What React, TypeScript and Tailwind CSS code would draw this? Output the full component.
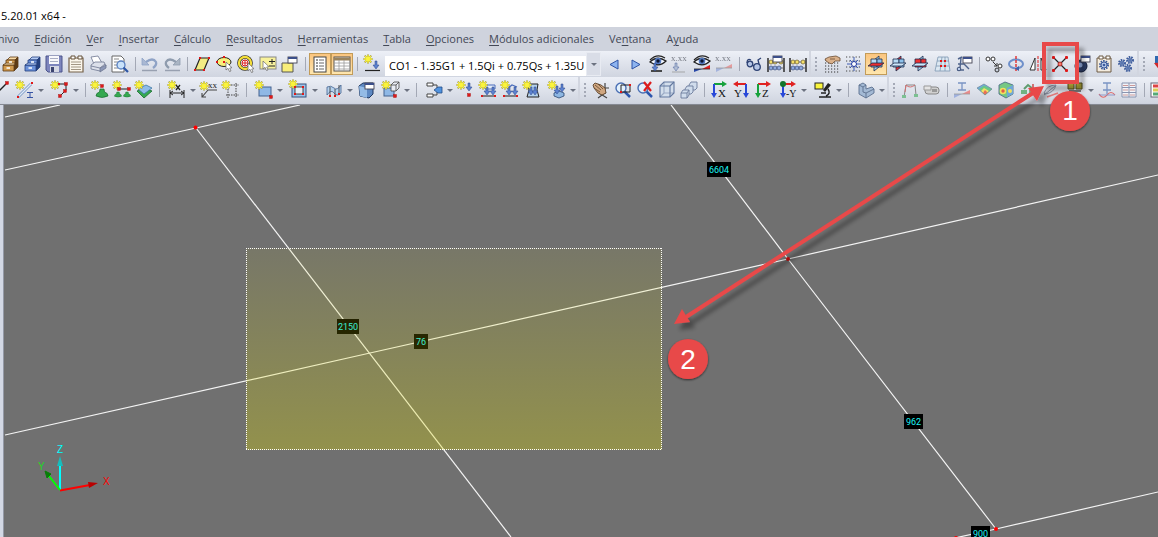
import type { ReactNode } from "react"

type Tool = {
  icon: string
  label: string
  caret?: boolean
  active?: boolean
}

type Item = Tool | "sep" | "grip" | "combo"

const menus: [string, string, string][] = [
  ["", "A", "rchivo"],
  ["", "E", "dición"],
  ["", "V", "er"],
  ["", "I", "nsertar"],
  ["", "C", "álculo"],
  ["", "R", "esultados"],
  ["", "H", "erramientas"],
  ["", "T", "abla"],
  ["", "O", "pciones"],
  ["", "M", "ódulos adicionales"],
  ["Ve", "n", "tana"],
  ["A", "y", "uda"],
]

/* Shared icon parts */
const Star = ({ x = 4, y = 4 }: { x?: number; y?: number }) => (
  <g transform={`translate(${x} ${y})`}>
    <path d="M0-4.500V4.500M-4.500 0H4.500M-3.300-3.300L3.300 3.300M3.300-3.300L-3.300 3.300" stroke="#a39a3a" strokeWidth="1.800" />
    <path d="M0-4V4M-4 0H4M-2.800-2.800L2.800 2.800M2.800-2.800L-2.800 2.800" stroke="#fbf43c" strokeWidth="1.300" />
  </g>
)

const Node = ({ x, y }: { x: number; y: number }) => (
  <rect x={x - 1.5} y={y - 1.5} width="3" height="3" fill="#e01818" stroke="#a01010" strokeWidth=".4" />
)

const Dot = ({ x, y }: { x: number; y: number }) => <rect x={x - 1} y={y - 1} width="2" height="2" fill="#e01818" />

const Cursor = ({ x, y }: { x: number; y: number }) => (
  <path transform={`translate(${x} ${y})`} d="M0 0V8L2 6.300L3.500 9.500L5 9L3.700 6L6 5.700Z" fill="#fff" stroke="#666" strokeWidth=".7" />
)

const Down = ({ x, y, c = "#5d82cf" }: { x: number; y: number; c?: string }) => (
  <path transform={`translate(${x} ${y})`} d="M-1 0H1V4H3L0 8L-3 4H-1Z" fill={c} stroke="#28448a" strokeWidth=".5" />
)

const Support = ({ x, y }: { x: number; y: number }) => (
  <path transform={`translate(${x} ${y})`} d="M-2 0H2L2.500 3Q6 4 6 7Q0 10-6 7Q-6 4-2.500 3Z" fill="#35a851" stroke="#176b2c" strokeWidth=".7" />
)

const Cabinet = ({ top, front, dark }: { top: string; front: string; dark: string }) => (
  <g stroke={dark} strokeWidth=".8">
    <path d="M6 5L9 2H17L14 5Z" fill={top} />
    <path d="M14 5L17 2V12L13 16V9Z" fill={dark} />
    <path d="M5 5H14V10H5Z" fill={front} />
    <path d="M2 10H13V16H2Z" fill={front} />
    <path d="M2 10L5 8H14L13 10Z" fill={top} />
    <path d="M8 7H11M5.500 13H9" stroke="#fff" strokeWidth="1.500" />
  </g>
)

const Eye = () => (
  <g>
    <path d="M1 7Q8 0 17 6Q10 13 1 7Z" fill="#f4f8ff" stroke="#222" strokeWidth="1.300" />
    <circle cx="9" cy="6" r="3.300" fill="#5379c0" />
    <circle cx="9" cy="6" r="1.700" fill="#0b1530" />
    <path d="M1 5Q8-2 16 3" stroke="#222" strokeWidth="1.200" />
  </g>
)

const Xxx = () => (
  <text x="0" y="6" fontSize="9" fontFamily="Liberation Serif, serif" fill="#60646e">
    x.xx
  </text>
)

const Planes = ({ hot }: { hot: "h" | "v" | "f" }) => (
  <g stroke="#1c2c4c" strokeWidth=".8">
    <path d="M7 5L12 1V12L7 16Z" fill={hot === "v" ? "#ee3030" : "#a8d4f4"} />
    <path d="M4 4H10V12H4Z" fill={hot === "f" ? "#ee3030" : "#b9dcf6"} />
    <path d="M10 4H15V12H10Z" fill={hot === "f" ? "#ee3030" : "#8ec2ec"} />
    <path d="M1 11L5 8H17L13 11Z" fill={hot === "h" ? "#ee3030" : "#cde7fa"} />
  </g>
)

const Cube = ({ c = "#d3deec", s = "#6378a0" }: { c?: string; s?: string }) => (
  <g stroke={s} strokeWidth="1.100">
    <path d="M2 5L6 1H16V12L12 16H2Z" fill={c} />
    <path d="M2 5H12V16M12 5L16 1" />
    <path d="M6 1V12H16M6 12L2 16" strokeOpacity=".5" />
  </g>
)

const Grid = () => (
  <path
    d="M2 5H17M2 8H17M2 11H17M2 14H17M2 17H17"
    stroke="#333"
    strokeWidth="1.200"
    strokeDasharray="1.200 1.800"
  />
)

const Axis = ({ h, v, name, flip, small }: { h: string; v: string; name: string; flip?: boolean; small?: boolean }) => (
  <g>
    <g transform={flip ? "translate(18 0) scale(-1 1)" : undefined}>
      <path d="M4 3H13" stroke={h} strokeWidth="2" />
      <path d="M12 0L17 3L12 6Z" fill={h} />
      <path d="M4 3V13" stroke={v} strokeWidth="2" />
      <path d="M1 12L4 17L7 12Z" fill={v} />
    </g>
    <text x={flip ? 2 : small ? 7 : 8} y="16" fontSize={small ? 10 : 11} fontFamily="Liberation Serif, serif" fill="#111">
      {name}
    </text>
  </g>
)

const Abacus = () => (
  <g>
    <path d="M1 3V17M17 3V17" stroke="#111" strokeWidth="1.300" />
    <path d="M1 7H17M1 13H17" stroke="#555" strokeWidth=".8" />
    <g fill="#f4df6a" stroke="#54451a" strokeWidth=".6">
      <circle cx="4" cy="7" r="2" />
      <circle cx="8" cy="7" r="2" />
      <circle cx="14" cy="7" r="2" />
    </g>
    <g fill="#8fa9dc" stroke="#263a6c" strokeWidth=".6">
      <circle cx="4" cy="13" r="2" />
      <circle cx="8" cy="13" r="2" />
      <circle cx="12" cy="13" r="2" />
    </g>
  </g>
)

const MiniWin = ({ x, y }: { x: number; y: number }) => (
  <g transform={`translate(${x} ${y})`}>
    <rect x="0" y="0" width="9" height="6" fill="#fff" stroke="#445" strokeWidth=".9" />
    <path d="M0 1H9" stroke="#3c4f8a" strokeWidth="2" />
  </g>
)

const Gear = ({ x, y, r }: { x: number; y: number; r: number }) => (
  <g>
    <circle cx={x} cy={y} r={r} fill="none" stroke="#3d5c9c" strokeWidth="2" strokeDasharray="1.500 1" />
    <circle cx={x} cy={y} r={r - 1} fill="#b9cbea" stroke="#3d5c9c" />
    <circle cx={x} cy={y} r={r / 3} fill="#3d5c9c" />
  </g>
)

const Magnifier = () => (
  <g>
    <path d="M10 10L16 16" stroke="#2d56ad" strokeWidth="2.500" />
    <circle cx="7" cy="7" r="5" fill="#e3f1fc" stroke="#4a6fb4" strokeWidth="1.400" />
  </g>
)

const icons: Record<string, ReactNode> = {
  cabinet: <Cabinet top="#f8dba8" front="#d19a4e" dark="#5d3a14" />,
  cabinetBlue: <Cabinet top="#b5ccf6" front="#6b90d8" dark="#24407e" />,
  save: (
    <g>
      <path d="M1 1H17V17H3L1 15Z" fill="#7d85bd" stroke="#4d558c" />
      <rect x="4" y="1" width="10" height="8" fill="#f8f8fb" />
      <path d="M5 3.500H13M5 6.500H13" stroke="#a9aec4" />
      <rect x="5" y="11" width="9" height="6" fill="#d5d8e4" />
      <rect x="6" y="12" width="3" height="5" fill="#3c4470" />
    </g>
  ),
  clipboard: (
    <g>
      <path d="M2 3H16V17H2Z" fill="#fbf6ec" stroke="#756149" strokeWidth="1.200" />
      <path d="M4 1H8V4H4ZM11 1H15V4H11Z" fill="#fff" stroke="#655139" />
      <path d="M4 7H14M4 9.500H14M4 12H14M4 14.500H14" stroke="#8c7d6a" strokeWidth=".8" />
    </g>
  ),
  print: (
    <g stroke="#6d7690" strokeWidth=".8">
      <path d="M2 2L9 1L13 8L5 9Z" fill="#fff" />
      <path d="M2 10L6 7L15 7L17 11L11 16L2 14Z" fill="#dce0ea" />
      <path d="M2 11L11 13L16 9" fill="none" />
      <path d="M11 13L17 10V13L11 17Z" fill="#8d98b8" />
    </g>
  ),
  preview: (
    <g>
      <path d="M1 1H10L13 4V17H1Z" fill="#fff" stroke="#666" />
      <path d="M3 4H8M3 7H8M3 10H6M3 13H7" stroke="#888" />
      <circle cx="10" cy="10" r="4" fill="#c9e2fa" stroke="#5a80c0" strokeWidth="1.300" />
      <path d="M12.500 12.500L17 17" stroke="#2d56a5" strokeWidth="2.200" />
    </g>
  ),
  undo: (
    <g fill="none" stroke="#8fa3c6">
      <path d="M5 7Q12 2 15 7Q16 10 12 13" strokeWidth="2.300" />
      <path d="M1 3V10H8Z" fill="#a9b8d3" strokeWidth=".8" />
      <path d="M1 15.500H16" stroke="#98a0b0" strokeWidth="1.500" />
    </g>
  ),
  redo: (
    <g fill="none" stroke="#8f9cae">
      <path d="M13 7Q6 2 3 7Q2 10 6 13" strokeWidth="2.300" />
      <path d="M17 3V10H10Z" fill="#aab5c4" strokeWidth=".8" />
      <path d="M2 15.500H17" stroke="#98a0b0" strokeWidth="1.500" />
    </g>
  ),
  selPoly: (
    <g>
      <path d="M2 15L7 3H16L11 15Z" fill="#f3ec84" stroke="#222" strokeWidth="1.200" />
      <Dot x={2} y={15} />
      <Dot x={7} y={3} />
      <Dot x={16} y={3} />
      <Dot x={11} y={15} />
    </g>
  ),
  selEllipse: (
    <g>
      <ellipse cx="9" cy="7" rx="7" ry="4.500" fill="#f9f07a" stroke="#222" />
      <Dot x={2} y={7} />
      <Dot x={9} y={2} />
      <Dot x={9} y={7} />
      <Cursor x={11} y={7} />
    </g>
  ),
  selRing: (
    <g>
      <circle cx="8" cy="8" r="6" fill="none" stroke="#222" strokeWidth="3.600" />
      <circle cx="8" cy="8" r="6" fill="none" stroke="#f5df3a" strokeWidth="2.400" />
      <circle cx="8" cy="8" r="3" fill="#fff" stroke="#d22" />
      <path d="M8 5V11M5 8H11" stroke="#d22" />
      <Cursor x={11} y={8} />
    </g>
  ),
  selPlus: (
    <g>
      <rect x="1" y="2" width="16" height="12" fill="#f8f29b" stroke="#888" />
      <path d="M13 4V9M10 6.500H16M10 11H16" stroke="#222" />
      <Cursor x={4} y={6} />
    </g>
  ),
  selWin: (
    <g>
      <path d="M1 8H12V17H1Z" fill="#f8ee7a" stroke="#555" />
      <MiniWin x={7} y={2} />
    </g>
  ),
  list: (
    <g>
      <rect x="3" y="2" width="12" height="15" fill="#fff" stroke="#444" />
      <path d="M5 5H7M5 8H7M5 11H7M5 14H7" stroke="#333" />
      <path d="M8 5H13M8 8H13M8 11H13M8 14H13" stroke="#666" />
    </g>
  ),
  table: (
    <g>
      <rect x="1" y="2" width="16" height="14" fill="#fff" stroke="#555" />
      <path d="M1 4H17" stroke="#9a835c" strokeWidth="3" />
      <path d="M1 8H17M1 11H17M1 14H17M6 5V16M11 5V16" stroke="#999" strokeWidth=".8" />
    </g>
  ),
  newLoad: (
    <g>
      <Star x={5} y={4} />
      <Down x={13} y={6} />
      <path d="M2 15.500H17" stroke="#222" strokeWidth="1.200" />
    </g>
  ),
  prev: <path d="M13 5V14L5 9.500Z" fill="#8db4f0" stroke="#2d53a5" />,
  next: <path d="M5 5V14L13 9.500Z" fill="#8db4f0" stroke="#2d53a5" />,
  eyeLoad: (
    <g>
      <Eye />
      <path d="M2 16H13" stroke="#222" strokeWidth="1.600" />
      <Down x={6} y={8} />
    </g>
  ),
  xxLoad: (
    <g opacity=".8">
      <Xxx />
      <Down x={5} y={8} c="#a8b6cf" />
      <path d="M1 17H14" stroke="#999" />
    </g>
  ),
  eyeRes: (
    <g>
      <path d="M1 17V14L9 14Z" fill="#2848a8" />
      <path d="M9 14L17 10V14Z" fill="#e02020" />
      <path d="M1 14H17" stroke="#222" strokeWidth=".8" />
      <Eye />
    </g>
  ),
  xxRes: (
    <g opacity=".8">
      <Xxx />
      <path d="M1 17V13H9Z" fill="#98aadb" />
      <path d="M9 13L17 9V13Z" fill="#e58a8a" />
      <path d="M1 13H17" stroke="#888" strokeWidth=".8" />
    </g>
  ),
  glasses: (
    <g fill="#b5c6e6" stroke="#2d4274" strokeWidth="1.300">
      <circle cx="5" cy="9" r="2.800" />
      <circle cx="12" cy="12" r="3.300" />
      <path d="M2 8Q2 3 6 5M7 10L9 11M14 9L13 5L16 3" fill="none" />
    </g>
  ),
  abacusWin: (
    <g>
      <Abacus />
      <MiniWin x={6} y={1} />
    </g>
  ),
  abacus: <Abacus />,
  handGrid: (
    <g>
      <Grid />
      <path d="M2 4L6 2L13 1L17 3V6L12 6L9 9L6 8L3 6Z" fill="#d9b08a" stroke="#6a4c34" strokeWidth=".8" />
      <path d="M7 4H12" stroke="#6a4c34" strokeWidth=".8" />
    </g>
  ),
  snap: (
    <g>
      <path d="M1 2H17M1 6H17M1 12H17M1 16H17" stroke="#444" strokeDasharray="1.200 2" />
      <path d="M9 2V16M2 9H16M5 5L13 13M13 5L5 13" stroke="#3050b0" strokeWidth=".9" />
      <circle cx="9" cy="9" r="2.500" fill="#fff" stroke="#2038a0" />
    </g>
  ),
  planeH: <Planes hot="h" />,
  planeV: <Planes hot="v" />,
  planeF: <Planes hot="f" />,
  gridRed: (
    <g>
      <path d="M5 2H15L17 16H2ZM4 6H16M3 11H16M9 2L7 16M12 2V16" fill="#dce8f2" stroke="#7f98b2" strokeWidth=".8" />
      <Dot x={8} y={6} />
      <Dot x={12} y={6} />
      <Dot x={8} y={11} />
      <Dot x={12} y={11} />
    </g>
  ),
  toolWin: (
    <g>
      <path d="M6 3L5 13M3 9H9L14 14M3 4L7 2M2 15H9" fill="none" stroke="#50648c" strokeWidth="1.400" />
      <MiniWin x={8} y={2} />
      <circle cx="4" cy="14" r="1.800" fill="#b9cbea" stroke="#40537a" />
    </g>
  ),
  moveNode: (
    <g fill="#fff" stroke="#333">
      <circle cx="3" cy="4" r="2" />
      <circle cx="8" cy="4" r="2" />
      <path d="M8 7L12 11M12 8V11H9" fill="none" />
      <circle cx="15" cy="11" r="2" />
      <circle cx="12" cy="15" r="2" fill="#c8d0dc" />
    </g>
  ),
  rotate: (
    <g fill="none">
      <ellipse cx="9" cy="9" rx="7" ry="4.500" stroke="#6d8fca" strokeWidth="2" />
      <path d="M9 1V17" stroke="#e02020" strokeWidth="1.300" strokeDasharray="3 1" />
      <path d="M12 11L8 13.500L12 16Z" fill="#3f62aa" />
    </g>
  ),
  mirror: (
    <g fill="#fff" stroke="#333">
      <path d="M6 3V15H1Z" />
      <path d="M12 3V15H17Z" />
      <path d="M9 1V17" stroke="#e02020" strokeDasharray="3 1" />
    </g>
  ),
  joinNodes: (
    <g>
      <path d="M3 3L15 15M15 3L3 15" stroke="#222" strokeWidth="1.200" />
      <rect x="1" y="1" width="3" height="3" rx="1" fill="#e01818" />
      <rect x="14" y="1" width="3" height="3" rx="1" fill="#e01818" />
      <rect x="1" y="14" width="3" height="3" rx="1" fill="#e01818" />
      <rect x="14" y="14" width="3" height="3" rx="1" fill="#e01818" />
      <circle cx="9" cy="9" r="2" fill="#f07a6a" stroke="#b01818" strokeWidth=".8" />
    </g>
  ),
  camera: (
    <g>
      <circle cx="8" cy="11" r="6" fill="#2c3c66" stroke="#111c38" />
      <circle cx="7" cy="10" r="2.500" fill="#8fa6d6" />
      <MiniWin x={8} y={1} />
    </g>
  ),
  gearPage: (
    <g>
      <path d="M2 3H16V17H2Z" fill="#f4ecdf" stroke="#6d5b45" />
      <path d="M4 1H8V4H4ZM11 1H15V4H11Z" fill="#fff" stroke="#6d5b45" />
      <Gear x={9} y={10} r={4} />
    </g>
  ),
  gears: (
    <g>
      <Gear x={5} y={8} r={3} />
      <Gear x={13} y={5} r={3} />
      <Gear x={11} y={13} r={3} />
    </g>
  ),
  redBlock: (
    <g>
      <path d="M4 1H15V8H4Z" fill="#2e69b0" />
      <path d="M3 8L9 16L16 11V7Z" fill="#d22a2a" />
    </g>
  ),
  line: (
    <g>
      <path d="M2 16L15 3" stroke="#222" strokeWidth="1.300" />
      <Node x={16} y={2} />
    </g>
  ),
  member: (
    <g>
      <path d="M2 16L15 3" stroke="#7f9cc8" strokeWidth="3" />
      <path d="M2 16L15 3" stroke="#dfe9f6" strokeWidth="1.300" />
      <Star />
      <Dot x={2} y={16} />
      <Dot x={16} y={2} />
      <path d="M11 11.500H17M11 16.500H17M14 11V17" stroke="#3654a4" />
    </g>
  ),
  polyline: (
    <g>
      <path d="M6 3H15V9L9 15" fill="none" stroke="#222" />
      <Star />
      <Dot x={8} y={3} />
      <Node x={15} y={3} />
      <Node x={14} y={10} />
      <Node x={9} y={15} />
    </g>
  ),
  support: (
    <g>
      <Star />
      <Support x={11} y={8} />
      <Node x={11} y={5} />
    </g>
  ),
  lineSupport: (
    <g>
      <path d="M5 8H16" stroke="#222" />
      <Star />
      <Node x={6} y={8} />
      <Node x={16} y={8} />
      <g transform="translate(5 11) scale(.6)">
        <Support x={0} y={0} />
      </g>
      <g transform="translate(14 11) scale(.6)">
        <Support x={0} y={0} />
      </g>
    </g>
  ),
  surfSupport: (
    <g>
      <path d="M2 10L9 7L17 10L9 17Z" fill="#35a851" stroke="#176b2c" strokeWidth=".8" />
      <path d="M3 8L11 4L17 7L9 13Z" fill="#8fbce8" stroke="#3d78a2" strokeWidth=".8" />
      <Star />
    </g>
  ),
  dimension: (
    <g>
      <path d="M2 9V17M16 9V17M2 12H16M5 10L2 12L5 14M13 10L16 12L13 14" fill="none" stroke="#222" />
      <Star />
      <path d="M8 4L12 9M12 4L8 9" stroke="#222" strokeWidth="1.300" />
    </g>
  ),
  comment: (
    <g>
      <path d="M17 9H8L2 16M2 12V16H6" fill="none" stroke="#444" strokeWidth="1.100" />
      <Star x={4} y={5} />
      <text x="8" y="7" fontSize="9" fontFamily="Liberation Serif, serif" fill="#222">
        xx
      </text>
    </g>
  ),
  guides: (
    <g>
      <path d="M6 3V17M14 2V17M4 4H17M4 14H17" stroke="#444" strokeDasharray="1.500 1" />
      <Star />
    </g>
  ),
  surface: (
    <g>
      <rect x="4" y="6" width="12" height="9" fill="#8fb8e6" stroke="#45638f" />
      <Star />
      <Node x={16} y={16} />
    </g>
  ),
  opening: (
    <g>
      <rect x="2" y="3" width="14" height="13" fill="#9ec4ea" stroke="#35537f" />
      <rect x="5" y="6" width="8" height="7" fill="#e8eef6" stroke="#222" strokeWidth=".8" />
      <Star x={3} y={3} />
      <Dot x={5} y={6} />
      <Dot x={13} y={6} />
      <Dot x={5} y={13} />
      <Dot x={13} y={13} />
    </g>
  ),
  curved: (
    <g>
      <path d="M2 6Q6 4 9 7T16 4V12Q12 16 9 12T2 14Z" fill="#b5d2ee" stroke="#45638f" strokeWidth=".8" />
      <path d="M5 6V15M10 8V15M14 4V13" stroke="#333" strokeWidth=".8" />
      <Dot x={5} y={15} />
      <Dot x={10} y={15} />
      <Dot x={14} y={13} />
    </g>
  ),
  solid: (
    <g>
      <path d="M2 5L6 2H16V13L12 17L3 15Z" fill="#5d88c2" stroke="#20375f" />
      <path d="M2 5L10 7V17L3 15Z" fill="#94bbe6" />
      <MiniWin x={8} y={2} />
    </g>
  ),
  newSolid: (
    <g>
      <rect x="2" y="7" width="10" height="8" fill="#8fb8e6" stroke="#45638f" />
      <path d="M9 4L12 1H17V7L14 10H9ZM9 4H14V10M14 4L17 1" fill="#e8ecf4" stroke="#444" strokeWidth=".8" />
      <Star />
      <Node x={13} y={15} />
    </g>
  ),
  convert: (
    <g>
      <path d="M2 2H8V5H2ZM2 13H8V16H2Z" fill="#fff" stroke="#444" />
      <path d="M8 4H12V7M8 14H12V11" fill="none" stroke="#444" />
      <path d="M9 9L13 6H17V12H13Z" fill="#4f92de" stroke="#234b86" strokeWidth=".8" />
    </g>
  ),
  nodeLoad: (
    <g>
      <Star />
      <Down x={12} y={2} />
      <Node x={12} y={14} />
    </g>
  ),
  memLoad: (
    <g>
      <path d="M6 4H16V8H6Z" fill="#e2ebf8" stroke="#4a6dbc" />
      <Down x={8} y={6} />
      <Down x={14} y={6} />
      <path d="M3 15H16" stroke="#222" />
      <Star />
      <Dot x={3} y={15} />
      <Dot x={16} y={15} />
    </g>
  ),
  memLoad2: (
    <g>
      <path d="M6 8L11 4L16 6" fill="none" stroke="#4a6dbc" strokeWidth="1.300" />
      <Down x={8} y={6} />
      <Down x={14} y={6} />
      <path d="M3 15H16" stroke="#222" />
      <Star />
      <Dot x={3} y={15} />
      <Dot x={16} y={15} />
    </g>
  ),
  surfLoad: (
    <g>
      <path d="M5 3H15L14 9L16 16H4L6 9Z" fill="#b3d0ec" stroke="#222" />
      <Down x={8} y={6} />
      <Down x={12} y={6} />
      <Star />
    </g>
  ),
  solidLoad: (
    <g>
      <path d="M6 12L11 10L16 12V15L11 17L6 15Z" fill="#8db6e2" stroke="#28456e" strokeWidth=".8" />
      <Down x={9} y={5} />
      <Down x={14} y={3} />
      <Star />
    </g>
  ),
  pan: (
    <g>
      <path d="M13 2V13M9 7H17M7 12L15 17M14 11L6 17" stroke="#444" strokeWidth="1.200" />
      <path d="M1 4L3 2L9 4L13 7L14 12L10 14L6 12L2 7Z" fill="#cfa680" stroke="#5f452c" strokeWidth=".9" />
      <path d="M3 4L9 9M6 3L11 8M2 7L8 11" stroke="#5f452c" strokeWidth=".8" />
    </g>
  ),
  zoomWin: (
    <g>
      <Magnifier />
      <path d="M7 4H16V11H7Z" fill="none" stroke="#222" />
      <Dot x={16} y={4} />
      <Dot x={7} y={11} />
    </g>
  ),
  zoomX: (
    <g>
      <Magnifier />
      <path d="M8 1L15 10M15 1L8 10" stroke="#dd1c1c" strokeWidth="2.200" />
    </g>
  ),
  cube: <Cube />,
  cubes: (
    <g fill="#d0dcec" stroke="#6c7c9c" strokeWidth=".9">
      <path d="M9 4L11 1H17V7L15 9H9Z" />
      <path d="M5 8L7 5H13V11L11 13H5Z" />
      <path d="M1 12L3 9H9V14L7 17H1Z" />
      <path d="M1 12H7V17M7 12L9 9" fill="none" />
    </g>
  ),
  axX: <Axis h="#17a23c" v="#2848d8" name="X" />,
  axY: <Axis h="#e02222" v="#2848d8" name="Y" flip />,
  axZ: <Axis h="#e02222" v="#17a23c" name="Z" />,
  axMinusY: (
    <g>
      <Axis h="#e02222" v="#2848d8" name="-Y" small />
      <circle cx="4" cy="3" r="3" fill="#14752c" />
    </g>
  ),
  microscope: (
    <g>
      <path d="M14 2L17 4L11 11L9 9Z" fill="#222" />
      <path d="M14 8Q17 13 12 15M5 16H17M7 12H12" stroke="#222" strokeWidth="1.500" />
      <rect x="1" y="2" width="8" height="6" fill="#fbf63c" stroke="#222" />
    </g>
  ),
  part: (
    <g stroke="#5c708e" strokeWidth=".9">
      <path d="M2 4L6 2L9 4V8L15 6L17 8V12L9 17L2 13Z" fill="#a3b9d4" />
      <path d="M2 4L6 6V11L9 12V17M6 6L9 4M9 12L17 8" fill="none" />
    </g>
  ),
  frame: (
    <g>
      <path d="M3 16L5 4H14L15 14" fill="none" stroke="#888" />
      <path d="M4 11L5 4Q9 8 14 4" fill="none" stroke="#d07070" />
      <path d="M1 14H5V17H1ZM13 13H17V16H13Z" fill="#7cc092" />
    </g>
  ),
  mould: (
    <g>
      <rect x="2" y="6" width="14" height="7" rx="3" fill="#d0d0d0" stroke="#888" />
      <path d="M1 5H8V9H1Z" fill="#e4e4e4" stroke="#999" />
      <rect x="9" y="8" width="5" height="3" fill="#999" />
    </g>
  ),
  resMember: (
    <g>
      <path d="M5 2H13M5 9H13M9 2V9" stroke="#7a94c4" strokeWidth="1.300" />
      <path d="M1 17V13H9Z" fill="#9fb1de" />
      <path d="M9 13L17 9V13Z" fill="#e88b8b" />
      <path d="M1 13H17" stroke="#999" strokeWidth=".8" />
    </g>
  ),
  rainbow: (
    <g>
      <path d="M2 7L9 3L17 8L10 14Z" fill="#6fa8e0" />
      <path d="M4 8L9 4.500L17 8L10 14Z" fill="#6cc884" />
      <path d="M6 10L9 7L14 10L10 14Z" fill="#f2e266" />
      <path d="M8 12L10 9L12.500 11.500L10 14Z" fill="#ea7058" />
      <path d="M2 7L9 3L17 8L10 14Z" stroke="#6f8a94" strokeWidth=".7" />
    </g>
  ),
  rainbowCube: (
    <g>
      <path d="M2 4L8 1L16 4V13L9 17L2 13Z" fill="#76c884" stroke="#507088" strokeWidth=".9" />
      <circle cx="6" cy="10" r="3.300" fill="#f0e060" />
      <circle cx="6" cy="10" r="1.700" fill="#e25b48" />
      <path d="M10 7L16 4V13L10 16Z" fill="#6fa8d8" />
      <circle cx="13" cy="10" r="2" fill="#f0e060" />
    </g>
  ),
  reactions: (
    <g opacity=".8">
      <path d="M5 8L9 4L14 8" fill="none" stroke="#3f8b50" strokeWidth="2" />
      <path d="M2 9H8V13H2ZM10 9H16V13H10Z" fill="#56a868" />
      <path d="M14 3V8" stroke="#c55" strokeWidth="2" />
    </g>
  ),
  pen: (
    <g>
      <path d="M3 12Q6 4 15 4Q13 12 4 13Z" fill="#d4d9e4" stroke="#8a92a4" />
      <path d="M3 14L14 5" stroke="#8a92a4" />
      <path d="M6 16L17 12" stroke="#e07a7a" strokeWidth="1.500" />
    </g>
  ),
  resultBox: (
    <g>
      <path d="M2 2H8V8H2ZM10 2H16V8H10Z" fill="#b0a538" stroke="#55501c" />
      <path d="M3 9H15V11H3Z" fill="#777" />
    </g>
  ),
  resLine: (
    <g>
      <path d="M5 2H13M5 9H13M9 2V13" stroke="#7a94c4" strokeWidth="1.300" />
      <path d="M1 13Q5 19 9 14T17 14" fill="none" stroke="#e06a6a" strokeWidth="1.200" />
      <path d="M1 14H17" stroke="#7c8cc4" strokeWidth=".8" />
    </g>
  ),
  sheets: (
    <g>
      <path d="M2 2H16V16H2ZM9 2V16M2 6.500H16M2 11.500H16" fill="#f2f4f9" stroke="#8994b0" />
      <path d="M3 4.500H8M10 4.500H15M3 9H8M10 9H15M3 14H8M10 14H15" stroke="#c99" />
    </g>
  ),
  legend: (
    <g>
      <rect x="1" y="2" width="15" height="14" fill="#fff" stroke="#667" />
      <path d="M3 5H14" stroke="#d44" strokeWidth="3" />
      <path d="M3 9H14" stroke="#dc5" strokeWidth="3" />
      <path d="M3 13H14" stroke="#5a7" strokeWidth="3" />
    </g>
  ),
}

const topRow: Item[] = [
  { icon: "cabinet", label: "Abrir modelo" },
  { icon: "cabinetBlue", label: "Administrador de proyectos" },
  { icon: "save", label: "Guardar" },
  { icon: "clipboard", label: "Datos generales" },
  { icon: "print", label: "Imprimir" },
  { icon: "preview", label: "Vista previa" },
  "sep",
  { icon: "undo", label: "Deshacer" },
  { icon: "redo", label: "Rehacer" },
  "sep",
  { icon: "selPoly", label: "Selección por rombo" },
  { icon: "selEllipse", label: "Selección por elipse" },
  { icon: "selRing", label: "Selección por anillo" },
  { icon: "selPlus", label: "Selección adicional" },
  { icon: "selWin", label: "Selección especial" },
  "sep",
  { icon: "list", label: "Navegador", active: true },
  { icon: "table", label: "Tablas", active: true },
  "sep",
  { icon: "newLoad", label: "Nuevo caso de carga" },
  "combo",
  { icon: "prev", label: "Caso anterior" },
  { icon: "next", label: "Caso siguiente" },
  { icon: "eyeLoad", label: "Mostrar cargas" },
  { icon: "xxLoad", label: "Valores de carga" },
  { icon: "eyeRes", label: "Mostrar resultados" },
  { icon: "xxRes", label: "Valores de resultados" },
  "sep",
  { icon: "glasses", label: "Comprobar" },
  { icon: "abacusWin", label: "Calcular seleccionados" },
  { icon: "abacus", label: "Calcular todo" },
  "grip",
  { icon: "handGrid", label: "Rejilla" },
  { icon: "snap", label: "Forzar cursor" },
  { icon: "planeH", label: "Plano XY", active: true },
  { icon: "planeV", label: "Plano YZ" },
  { icon: "planeF", label: "Plano XZ" },
  { icon: "gridRed", label: "Rejilla de líneas" },
  { icon: "toolWin", label: "Sistema de coordenadas" },
  "sep",
  { icon: "moveNode", label: "Mover o copiar" },
  { icon: "rotate", label: "Girar" },
  { icon: "mirror", label: "Simetría" },
  { icon: "joinNodes", label: "Conectar líneas o barras" },
  { icon: "camera", label: "Visibilidad" },
  { icon: "gearPage", label: "Opciones de visualización" },
  { icon: "gears", label: "Configuración" },
  "grip",
  { icon: "redBlock", label: "Módulos" },
]

const bottomRow: Item[] = [
  { icon: "line", label: "Nueva línea" },
  { icon: "member", label: "Nueva barra", caret: true },
  { icon: "polyline", label: "Nueva polilínea", caret: true },
  "sep",
  { icon: "support", label: "Apoyo en nudo" },
  { icon: "lineSupport", label: "Apoyo en línea" },
  { icon: "surfSupport", label: "Apoyo en superficie" },
  "sep",
  { icon: "dimension", label: "Nueva cota", caret: true },
  { icon: "comment", label: "Nuevo comentario" },
  { icon: "guides", label: "Nueva línea guía" },
  "sep",
  { icon: "surface", label: "Nueva superficie", caret: true },
  { icon: "opening", label: "Nueva abertura", caret: true },
  { icon: "curved", label: "Superficie curva", caret: true },
  { icon: "solid", label: "Editar sólido" },
  { icon: "newSolid", label: "Nuevo sólido", caret: true },
  "sep",
  { icon: "convert", label: "Generar modelo", caret: true },
  { icon: "nodeLoad", label: "Carga en nudo" },
  { icon: "memLoad", label: "Carga en barra" },
  { icon: "memLoad2", label: "Carga en línea" },
  { icon: "surfLoad", label: "Carga superficial" },
  { icon: "solidLoad", label: "Carga en sólido", caret: true },
  "grip",
  { icon: "pan", label: "Mover vista" },
  { icon: "zoomWin", label: "Zoom ventana" },
  { icon: "zoomX", label: "Mostrar todo" },
  { icon: "cube", label: "Vista isométrica" },
  { icon: "cubes", label: "Perspectiva" },
  "sep",
  { icon: "axX", label: "Vista en X" },
  { icon: "axY", label: "Vista en Y" },
  { icon: "axZ", label: "Vista en Z" },
  { icon: "axMinusY", label: "Vista en -Y", caret: true },
  { icon: "microscope", label: "Visibilidades", caret: true },
  "sep",
  { icon: "part", label: "Modo de representación", caret: true },
  "grip",
  { icon: "frame", label: "Deformaciones" },
  { icon: "mould", label: "Animación" },
  "sep",
  { icon: "resMember", label: "Resultados de barras" },
  { icon: "rainbow", label: "Resultados de superficies" },
  { icon: "rainbowCube", label: "Resultados de sólidos" },
  { icon: "reactions", label: "Reacciones" },
  { icon: "pen", label: "Diagrama" },
  { icon: "resultBox", label: "Panel de resultados", caret: true },
  { icon: "resLine", label: "Sección" },
  { icon: "sheets", label: "Tablas de resultados" },
  "sep",
  { icon: "legend", label: "Leyenda" },
]

const Icon = ({ name }: { name: string }) => (
  <svg width="18" height="18" viewBox="0 0 18 18" fill="none" className="shrink-0 overflow-visible" aria-hidden="true">
    {icons[name]}
  </svg>
)

function ToolButton({ icon, label, caret, active }: Tool) {
  if (caret) {
    return (
      <button aria-label={label} className="flex h-6 w-[35px] shrink-0 items-center gap-1 pl-[5px]">
        <Icon name={icon} />
        <span className="border-x-[3px] border-t-[3px] border-x-transparent border-t-[#6c7280]" />
      </button>
    )
  }
  return (
    <button
      aria-label={label}
      aria-pressed={active}
      className={
        active
          ? "flex h-[22px] w-[22px] shrink-0 items-center justify-center border border-[#c29b58] bg-gradient-to-b from-[#fbc57e] to-[#fee6ae]"
          : "flex h-6 w-[22px] shrink-0 items-center justify-center"
      }
    >
      <Icon name={icon} />
    </button>
  )
}

function LoadCaseCombo() {
  return (
    <div className="relative mx-[2px] w-[216px] shrink-0">
      <select
        aria-label="Caso de carga"
        className="h-[20px] w-full appearance-none overflow-hidden bg-white pl-1 pr-4 font-['Open_Sans',sans-serif] text-[11px] leading-5 text-black"
      >
        <option>CO1 - 1.35G1 + 1.5Qi + 0.75Qs + 1.35U</option>
      </select>
      <span className="pointer-events-none absolute inset-y-0 right-0 flex w-[15px] items-center justify-center border border-[#e8ebf2] bg-[#d9dde7]">
        <span className="border-x-[3px] border-t-[3px] border-x-transparent border-t-[#6c7280]" />
      </span>
    </div>
  )
}

function Toolbar({ items, label }: { items: Item[]; label: string }) {
  return (
    <div
      role="toolbar"
      aria-label={label}
      className="flex h-[26px] items-center overflow-hidden bg-gradient-to-b from-[#edf0f7] to-[#d0d5e0]"
    >
      {items.map((item, i) => {
        if (item === "sep")
          return (
            <span key={i} className="flex w-2 shrink-0 justify-center">
              <span className="h-[14px] w-px bg-[#a3a8b5]" />
            </span>
          )
        if (item === "grip")
          return (
            <span key={i} className="flex w-3 shrink-0 justify-center self-stretch border-l-2 border-[#d2d6e0] py-[6px]">
              <span className="border-l-2 border-dotted border-[#a4a9b6]" />
            </span>
          )
        if (item === "combo") return <LoadCaseCombo key={i} />
        return <ToolButton key={i} {...item} />
      })}
    </div>
  )
}

const tags = [
  { text: "6604", x: 707, y: 162, w: 24 },
  { text: "962", x: 904, y: 414, w: 19 },
  { text: "900", x: 971, y: 526, w: 19 },
  { text: "2150", x: 337, y: 319, w: 22 },
  { text: "76", x: 414, y: 334, w: 14 },
]

function ModelView() {
  return (
    <svg className="absolute inset-0 h-full w-full" fill="none" aria-label="Modelo">
      <defs>
        <linearGradient id="sel" x1="0" y1="0" x2="0" y2="1">
          <stop offset="0" stopColor="#dcd800" stopOpacity=".07" />
          <stop offset="1" stopColor="#dcd800" stopOpacity=".32" />
        </linearGradient>
      </defs>
      <g transform="translate(-4 -105)">
        <g stroke="#f4f4f4" strokeWidth="1.200">
          <path d="M5 117L60 105" />
          <path d="M5 170L196 128L300 105" />
          <path d="M196 128L511 537" />
          <path d="M671 105L788 259L996 529" />
          <path d="M5 435L370 353L788 259L1158 175L2600 -152" />
          <path d="M950 539L996 529L1158 492L2600 168" />
        </g>
        <g fill="#ff0000">
          <circle cx="195.500" cy="127.500" r="2" />
          <circle cx="788" cy="259" r="2" fill="#cc1010" />
          <circle cx="996" cy="529" r="2" />
          <circle cx="956" cy="538" r="2" />
        </g>

        {/* Member numbers */}
        {tags.map((t) => (
          <g key={t.text}>
            <rect x={t.x} y={t.y} width={t.w} height="15" fill="#000" />
            <text
              x={t.x + t.w / 2}
              y={t.y + 11}
              textAnchor="middle"
              fontSize="9"
              fontFamily="Roboto, sans-serif"
              fill="#1cf4f4"
            >
              {t.text}
            </text>
          </g>
        ))}

        {/* Selection window */}
        <rect x="246" y="248" width="416" height="202" fill="url(#sel)" />
        <path
          d="M246 248.500H662M246 449.500H662M246.500 248V450M661.500 248V450"
          stroke="#fff"
          strokeDasharray="1 1"
        />

        {/* Global axes */}
        <g fontSize="10" fontFamily="Liberation Sans, sans-serif">
          <path d="M60 490V464" stroke="#00ffff" strokeWidth="2" />
          <path d="M57 466L60 456L63 466Z" fill="#18bcbc" />
          <text x="57" y="453" fill="#00ffff">
            Z
          </text>
          <path d="M60 490.500L90 485" stroke="#ff0000" strokeWidth="2" />
          <path d="M88 482L98 483L89 488Z" fill="#b80000" />
          <text x="103" y="485" fill="#ff0000">
            X
          </text>
          <path d="M60 490L49 476" stroke="#00ff00" strokeWidth="2" />
          <path d="M45 471L51 474L47 478Z" fill="#087d08" stroke="#087d08" />
          <text x="38" y="470" fill="#20d820">
            Y
          </text>
        </g>
      </g>
    </svg>
  )
}

function Callouts() {
  return (
    <svg className="pointer-events-none absolute inset-0 h-full w-full" aria-label="Pasos 1 y 2">
      <defs>
        <filter id="shadow" x="-20%" y="-20%" width="140%" height="140%">
          <feDropShadow dx="5" dy="6" stdDeviation="2" floodColor="#000" floodOpacity=".35" />
        </filter>
        <filter id="badgeShadow" x="-20%" y="-20%" width="140%" height="140%">
          <feDropShadow dx="0" dy="1" stdDeviation="1" floodColor="#000" floodOpacity=".6" />
        </filter>
      </defs>
      <g filter="url(#shadow)">
        <path d="M686 317L1033 93" stroke="#e84848" strokeWidth="4" />
        <path d="M674 324L682 309L690 322Z" fill="#e84848" />
        <path d="M1044 86L1028 88L1037 101Z" fill="#e84848" />
        <rect x="1044" y="44" width="33" height="38" fill="none" stroke="#e84848" strokeWidth="4" />
      </g>
      <g filter="url(#badgeShadow)" fill="#e84848">
        <circle cx="1070" cy="111" r="20" />
        <circle cx="688" cy="359" r="20" />
      </g>
      <g fill="#fff" fontSize="28" fontFamily="Liberation Sans, Arial, sans-serif" textAnchor="middle">
        <text x="1070" y="120">
          1
        </text>
        <text x="688" y="369">
          2
        </text>
      </g>
    </svg>
  )
}

export default function App() {
  return (
    <div className="relative flex h-screen flex-col overflow-hidden bg-[#cdd2de] font-['Open_Sans',sans-serif]">
      <header className="h-[27px] shrink-0 bg-white pl-px pt-[6px] text-[11px] leading-5 text-black">5.20.01 x64 -</header>

      <nav className="flex h-6 shrink-0 items-center gap-[15px] overflow-hidden bg-[#cfd3dd] text-[11px] text-[#434856]">
        {menus.map(([pre, key, rest], i) => (
          <a key={i} href="#" className={i === 0 ? "-ml-[19px] shrink-0" : "shrink-0"}>
            {pre}
            <span className="underline underline-offset-2">{key}</span>
            {rest}
          </a>
        ))}
      </nav>

      <div className="shrink-0 overflow-hidden">
        <div className="-ml-px">
          <Toolbar items={topRow} label="Estándar" />
        </div>
        <div className="-ml-[11px]">
          <Toolbar items={bottomRow} label="Insertar" />
        </div>
      </div>

      <main className="mt-px flex flex-1 border-t border-[#858992]">
        <div className="w-1 shrink-0 border-r border-[#9499a6] bg-[#d3d8e4]" />
        <div className="relative flex-1 overflow-hidden bg-[#707070]">
          <ModelView />
        </div>
      </main>

      <Callouts />
    </div>
  )
}
